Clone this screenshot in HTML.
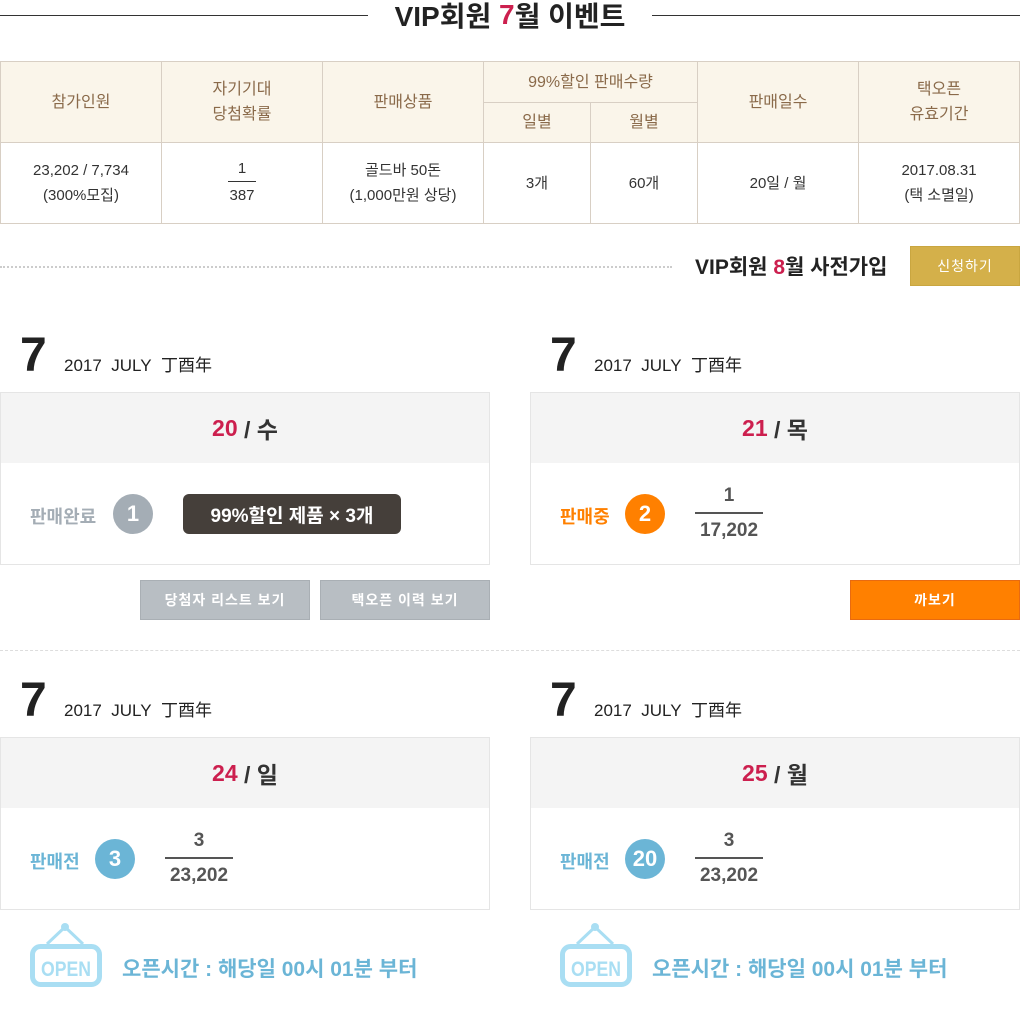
<!DOCTYPE html>
<html><head><meta charset="utf-8"><style>
*{margin:0;padding:0;box-sizing:border-box}
body{width:1020px;height:1016px;position:relative;background:#fff;font-family:"Liberation Sans","Noto Sans CJK KR",sans-serif;color:#333;overflow:hidden}
.a{position:absolute}
.c{display:flex;align-items:center;justify-content:center;text-align:center}
table{position:absolute;left:0;top:61px;width:1019px;border-collapse:collapse;font-size:15px;table-layout:fixed}
td{border:1px solid #d8cfc4;text-align:center;line-height:25px}
.h td{background:#faf5ea;color:#8a6a4a;font-size:16px}
.big7{font-size:48px;font-weight:bold;color:#222;line-height:48px}
.yr{font-size:17px;color:#222}
.box{border:1px solid #e5e5e5;background:#fff}
.bh{background:#f4f4f4;height:70px;font-size:23px;font-weight:bold}
.red{color:#cc1f4e}
.st{font-size:18px;font-weight:bold}
.cir{width:40px;height:40px;border-radius:50%;color:#fff;font-size:22px;font-weight:bold}
.frac{width:68px;text-align:center;font-size:19px;font-weight:bold;color:#555;line-height:26px}
.frac .n{border-bottom:2px solid #555;padding-bottom:3px}
.frac .d{padding-top:4px}
.btn{height:40px;color:#fff;font-size:14px;font-weight:bold;letter-spacing:1px}
.op{font-size:21px;font-weight:bold;color:#6bb5d6}
</style></head><body>
<div class="a" style="left:0;top:15px;width:368px;height:1px;background:#333"></div>
<div class="a" style="left:652px;top:15px;width:368px;height:1px;background:#333"></div>
<div class="a c" style="left:368px;top:-3px;width:284px;height:36px;font-size:28px;font-weight:bold;color:#222">VIP회원&nbsp;<span class="red">7</span>월 이벤트</div>

<table>
<colgroup><col style="width:161px"><col style="width:161px"><col style="width:161px"><col style="width:107px"><col style="width:107px"><col style="width:161px"><col style="width:161px"></colgroup>
<tr class="h" style="height:41px"><td rowspan="2">참가인원</td><td rowspan="2">자기기대<br>당첨확률</td><td rowspan="2">판매상품</td><td colspan="2">99%할인 판매수량</td><td rowspan="2">판매일수</td><td rowspan="2">택오픈<br>유효기간</td></tr>
<tr class="h" style="height:40px"><td>일별</td><td>월별</td></tr>
<tr style="height:81px"><td>23,202 / 7,734<br>(300%모집)</td><td><div style="width:28px;margin:0 auto;border-bottom:1px solid #333;line-height:24px">1</div><div style="line-height:28px">387</div></td><td>골드바 50돈<br>(1,000만원 상당)</td><td>3개</td><td>60개</td><td>20일 / 월</td><td>2017.08.31<br>(택 소멸일)</td></tr>
</table>

<div class="a" style="left:0;top:266px;width:672px;border-top:2px dotted #ccc"></div>
<div class="a" style="left:695px;top:251px;font-size:21px;font-weight:bold;color:#222;white-space:nowrap">VIP회원 <span class="red">8</span>월 사전가입</div>
<div class="a c btn" style="left:910px;top:246px;width:110px;background:#d4b04a;font-weight:normal;border:1px solid #c9a640">신청하기</div>

<div class="a big7" style="left:20px;top:332px">7</div>
<div class="a yr" style="left:64px;top:351px">2017&nbsp; JULY&nbsp; 丁酉年</div>
<div class="a box" style="left:0;top:392px;width:490px;height:173px"><div class="c bh"><span class="red">20</span>&nbsp;/&nbsp;수</div></div>
<div class="a st" style="left:30px;top:503px;color:#a4adb5">판매완료</div>
<div class="a c cir" style="left:113px;top:494px;background:#a4adb5">1</div>
<div class="a c" style="left:183px;top:494px;width:218px;height:40px;background:#453f3a;border-radius:6px;color:#fff;font-size:19px;font-weight:bold">99%할인 제품 × 3개</div>
<div class="a c btn" style="left:140px;top:580px;width:170px;background:#b8bec3;border:1px solid #a9afb4">당첨자 리스트 보기</div>
<div class="a c btn" style="left:320px;top:580px;width:170px;background:#b8bec3;border:1px solid #a9afb4">택오픈 이력 보기</div>

<div class="a big7" style="left:550px;top:332px">7</div>
<div class="a yr" style="left:594px;top:351px">2017&nbsp; JULY&nbsp; 丁酉年</div>
<div class="a box" style="left:530px;top:392px;width:490px;height:173px"><div class="c bh"><span class="red">21</span>&nbsp;/&nbsp;목</div></div>
<div class="a st" style="left:560px;top:503px;color:#ff8000">판매중</div>
<div class="a c cir" style="left:625px;top:494px;background:#ff8000">2</div>
<div class="a frac" style="left:695px;top:483px"><div class="n">1</div><div class="d">17,202</div></div>
<div class="a c btn" style="left:850px;top:580px;width:170px;background:#ff8000;border:1px solid #e86a10">까보기</div>

<div class="a" style="left:0;top:650px;width:1020px;border-top:1px dashed #ddd"></div>

<div class="a big7" style="left:20px;top:677px">7</div>
<div class="a yr" style="left:64px;top:696px">2017&nbsp; JULY&nbsp; 丁酉年</div>
<div class="a box" style="left:0;top:737px;width:490px;height:173px"><div class="c bh"><span class="red">24</span>&nbsp;/&nbsp;일</div></div>
<div class="a st" style="left:30px;top:848px;color:#6bb5d6">판매전</div>
<div class="a c cir" style="left:95px;top:839px;background:#6bb5d6">3</div>
<div class="a frac" style="left:165px;top:828px"><div class="n">3</div><div class="d">23,202</div></div>

<div class="a big7" style="left:550px;top:677px">7</div>
<div class="a yr" style="left:594px;top:696px">2017&nbsp; JULY&nbsp; 丁酉年</div>
<div class="a box" style="left:530px;top:737px;width:490px;height:173px"><div class="c bh"><span class="red">25</span>&nbsp;/&nbsp;월</div></div>
<div class="a st" style="left:560px;top:848px;color:#6bb5d6">판매전</div>
<div class="a c cir" style="left:625px;top:839px;background:#6bb5d6">20</div>
<div class="a frac" style="left:695px;top:828px"><div class="n">3</div><div class="d">23,202</div></div>

<svg class="a" style="left:30px;top:923px" width="72" height="66" viewBox="0 0 72 66">
<path d="M17 21 L35 4 L53 21" stroke="#a9def3" stroke-width="3" fill="none"/><circle cx="35" cy="4" r="4" fill="#a9def3"/>
<rect x="2.5" y="23.5" width="67" height="38" rx="8" fill="none" stroke="#a9def3" stroke-width="5"/>
<text x="36" y="53" text-anchor="middle" font-family="Liberation Sans" font-weight="bold" font-size="21" fill="#a9def3" textLength="50" lengthAdjust="spacingAndGlyphs">OPEN</text></svg>
<div class="a op" style="left:122px;top:953px">오픈시간 : 해당일 00시 01분 부터</div>
<svg class="a" style="left:560px;top:923px" width="72" height="66" viewBox="0 0 72 66">
<path d="M17 21 L35 4 L53 21" stroke="#a9def3" stroke-width="3" fill="none"/><circle cx="35" cy="4" r="4" fill="#a9def3"/>
<rect x="2.5" y="23.5" width="67" height="38" rx="8" fill="none" stroke="#a9def3" stroke-width="5"/>
<text x="36" y="53" text-anchor="middle" font-family="Liberation Sans" font-weight="bold" font-size="21" fill="#a9def3" textLength="50" lengthAdjust="spacingAndGlyphs">OPEN</text></svg>
<div class="a op" style="left:652px;top:953px">오픈시간 : 해당일 00시 01분 부터</div>
</body></html>
